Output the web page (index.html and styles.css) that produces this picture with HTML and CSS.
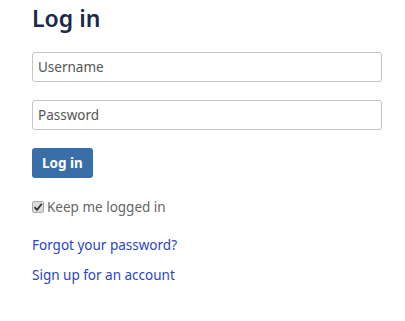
FILE: index.html
```html
<!DOCTYPE html>
<html>
<head>
<meta charset="utf-8">
<link rel="stylesheet" href="styles.css">
</head>
<body>
<main class="login">
  <h1 class="title">Log in</h1>
  <form class="form">
    <input class="field" type="text" placeholder="Username">
    <input class="field" type="password" placeholder="Password">
    <button class="btn" type="button">Log in</button>
    <label class="remember"><span class="box"><svg width="10" height="10" viewBox="0 0 10 10"><path d="M1.5 5.2 L4 7.8 L8.8 1.8" fill="none" stroke="#333" stroke-width="1.8"/></svg></span>Keep me logged in</label>
  </form>
  <div class="links">
    <a class="link" href="#">Forgot your password?</a>
    <a class="link" href="#">Sign up for an account</a>
  </div>
</main>
</body>
</html>
```
FILE: styles.css
```css
html, body {
  margin: 0;
  padding: 0;
  background: #fff;
}
body {
  font-family: "Noto Sans", "Open Sans", sans-serif;
  font-size: 13.5px;
  color: #333;
}
.login {
  padding: 0 23px 0 32px;
}
.title {
  margin: 0;
  padding-top: 2px;
  font-size: 23px;
  line-height: 32px;
  font-weight: 600;
  color: #1b2a48;
}
.form {
  display: flex;
  flex-direction: column;
  align-items: flex-start;
  margin-top: 18px;
}
.field {
  box-sizing: border-box;
  width: 350px;
  height: 30px;
  margin: 0 0 18px 0;
  padding: 0 5px;
  border: 1px solid #c2c6cf;
  border-radius: 3px;
  font-family: inherit;
  font-size: 13.5px;
  color: #333;
}
.field::placeholder {
  color: #555;
}
.btn {
  height: 30px;
  padding: 0 10px;
  border: none;
  border-radius: 3px;
  background: #3a6ea8;
  color: #fff;
  font-family: inherit;
  font-size: 13.5px;
  font-weight: 700;
}
.remember {
  display: flex;
  align-items: center;
  margin-top: 19px;
  color: #666;
  line-height: 20px;
}
.box {
  box-sizing: border-box;
  width: 12px;
  height: 12px;
  margin-right: 3px;
  border: 1px solid #a9a9a9;
  border-radius: 2px;
  background: #dcdcdc;
  display: flex;
  align-items: center;
  justify-content: center;
}
.links {
  display: flex;
  flex-direction: column;
  gap: 10px;
  margin-top: 18px;
}
.link {
  color: #2a45c8;
  text-decoration: none;
  line-height: 20px;
}
```
